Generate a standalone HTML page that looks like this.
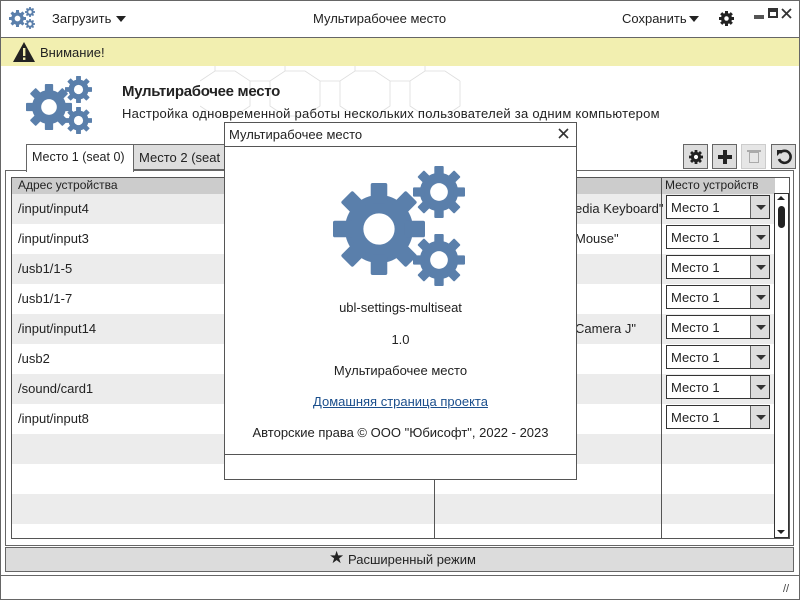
<!DOCTYPE html>
<html><head><meta charset="utf-8"><style>
*{box-sizing:border-box;margin:0;padding:0}
body{width:800px;height:600px;overflow:hidden;background:#fff;font-family:"Liberation Sans","DejaVu Sans",sans-serif;font-size:13px;color:#222;position:relative}
.abs{position:absolute}
.row{position:absolute;left:12px;width:763px;height:30px}
.row span{position:absolute;top:7px}
.combo{position:absolute;left:666px;width:104px;height:24px;border:1px solid #333;background:#fff}
.combo span{position:absolute;left:4px;top:4px}
.combo i{position:absolute;right:0;top:0;width:19px;height:22px;background:#ddd;border-left:1px solid #666}
.combo i:after{content:"";position:absolute;left:5px;top:9px;border-left:5px solid transparent;border-right:5px solid transparent;border-top:5px solid #333}
.btn{position:absolute;top:144px;width:25px;height:25px;border:1px solid #666;background:#ddd}
</style></head><body>
<svg width="0" height="0" style="position:absolute"><defs>
<symbol id="g" viewBox="-50 -50 100 100"><g fill="#5a7fab"><circle r="37"/>
<rect x="-9" y="-50" width="18" height="22" rx="2"/><rect x="-9" y="-50" width="18" height="22" rx="2" transform="rotate(45)"/><rect x="-9" y="-50" width="18" height="22" rx="2" transform="rotate(90)"/><rect x="-9" y="-50" width="18" height="22" rx="2" transform="rotate(135)"/><rect x="-9" y="-50" width="18" height="22" rx="2" transform="rotate(180)"/><rect x="-9" y="-50" width="18" height="22" rx="2" transform="rotate(225)"/><rect x="-9" y="-50" width="18" height="22" rx="2" transform="rotate(270)"/><rect x="-9" y="-50" width="18" height="22" rx="2" transform="rotate(315)"/></g><circle r="17" fill="#fff"/></symbol>
<symbol id="gd" viewBox="-50 -50 100 100"><g fill="#222"><circle r="37"/>
<rect x="-10" y="-50" width="20" height="22"/><rect x="-10" y="-50" width="20" height="22" transform="rotate(45)"/><rect x="-10" y="-50" width="20" height="22" transform="rotate(90)"/><rect x="-10" y="-50" width="20" height="22" transform="rotate(135)"/><rect x="-10" y="-50" width="20" height="22" transform="rotate(180)"/><rect x="-10" y="-50" width="20" height="22" transform="rotate(225)"/><rect x="-10" y="-50" width="20" height="22" transform="rotate(270)"/><rect x="-10" y="-50" width="20" height="22" transform="rotate(315)"/></g><circle r="15" fill="#fff"/></symbol>
</defs></svg>
<div class="abs" style="left:0;top:0;width:800px;height:600px;border:1px solid #666"></div>
<!-- title bar -->
<svg class="abs" style="left:9px;top:6px" width="28" height="24"><use href="#g" x="0" y="4" width="17" height="17"/><use href="#g" x="16" y="1" width="10" height="10"/><use href="#g" x="16" y="13" width="10" height="10"/></svg>
<div class="abs" style="left:52px;top:11px">Загрузить</div>
<div class="abs" style="left:116px;top:16px;border-left:5px solid transparent;border-right:5px solid transparent;border-top:6px solid #222"></div>
<div class="abs" style="left:313px;top:11px">Мультирабочее место</div>
<div class="abs" style="left:622px;top:11px">Сохранить</div>
<div class="abs" style="left:689px;top:16px;border-left:5px solid transparent;border-right:5px solid transparent;border-top:6px solid #222"></div>
<svg class="abs" style="left:719px;top:11px" width="15" height="15"><use href="#gd" width="15" height="15"/></svg>
<div class="abs" style="left:754px;top:15px;width:10px;height:4px;background:#555"></div>
<div class="abs" style="left:768px;top:8px;width:10px;height:10px;border:2px solid #333;border-top-width:4px"></div>
<svg class="abs" style="left:781px;top:8px" width="11" height="11"><path d="M1 1 L10 10 M10 1 L1 10" stroke="#333" stroke-width="1.8"/></svg>
<div class="abs" style="left:0;top:37px;width:800px;height:1px;background:#666"></div>
<!-- warning -->
<div class="abs" style="left:1px;top:38px;width:798px;height:28px;background:#f2efb0"></div>
<svg class="abs" style="left:12px;top:41px" width="24" height="22"><path d="M12 1 L23 21 L1 21 Z" fill="#222"/><rect x="11" y="7" width="2.4" height="8" fill="#f2efb0"/><rect x="11" y="16.5" width="2.4" height="2.4" fill="#f2efb0"/></svg>
<div class="abs" style="left:40px;top:45px">Внимание!</div>
<!-- header -->
<svg class="abs" style="left:200px;top:66px" width="270" height="60" stroke="#ddd" fill="none" stroke-width="0.8"><path d="M0 15 L15 5 L35 5 L50 15 L70 15 L85 5 L105 5 L120 15 L140 15 L155 5 L175 5 L190 15 L210 15 L225 5 L245 5 L260 15 M15 5 L15 0 M85 5 L85 0 M155 5 L155 0 M225 5 L225 0 M50 15 L50 40 L35 50 L15 50 L0 40 M120 15 L120 40 L105 50 L85 50 L70 40 L70 15 M190 15 L190 40 L175 50 L155 50 L140 40 L140 15 M260 15 L260 40 L245 50 L225 50 L210 40 L210 15"/></svg>
<svg class="abs" style="left:26px;top:76px" width="68" height="58"><use href="#g" x="0" y="8" width="46" height="46"/><use href="#g" x="39" y="0" width="27" height="27"/><use href="#g" x="39" y="31" width="27" height="27"/></svg>
<div class="abs" style="left:122px;top:83px;font-size:15px;font-weight:bold;letter-spacing:-0.3px">Мультирабочее место</div>
<div class="abs" style="left:122px;top:106px;letter-spacing:0.25px">Настройка одновременной работы нескольких пользователей за одним компьютером</div>
<!-- tabs -->
<div class="abs" style="left:26px;top:144px;width:108px;height:28px;border:1px solid #666;border-bottom:none;background:#fff;z-index:2"><span style="position:absolute;left:5px;top:5px;font-size:12.5px">Место 1 (seat 0)</span></div>
<div class="abs" style="left:133px;top:144px;width:100px;height:26px;border:1px solid #666;background:#ddd"><span style="position:absolute;left:5px;top:5px">Место 2 (seat</span></div>
<div class="btn" style="left:683px"><svg style="position:absolute;left:5px;top:5px" width="14" height="14"><use href="#gd" width="14" height="14"/></svg></div>
<div class="btn" style="left:712px"><div class="abs" style="left:5px;top:10px;width:14px;height:4px;background:#222"></div><div class="abs" style="left:10px;top:5px;width:4px;height:14px;background:#222"></div></div>
<div class="btn" style="left:741px;border-color:#ccc;background:#e6e6e6"><div class="abs" style="left:7px;top:7px;width:10px;height:11px;border:1px solid #aaa"></div><div class="abs" style="left:5px;top:5px;width:14px;height:2px;background:#aaa"></div></div>
<div class="btn" style="left:771px"><svg style="position:absolute;left:4px;top:4px" width="16" height="16"><path d="M4 4 A6 6 0 1 1 3 10" fill="none" stroke="#222" stroke-width="2.6"/><path d="M1 1 L7 1 L1 7Z" fill="#222"/></svg></div>
<!-- table -->
<div class="abs" style="left:5px;top:170px;width:789px;height:376px;border:1px solid #666"></div>
<div class="abs" style="left:11px;top:177px;width:779px;height:362px;border:1px solid #555"></div>
<div class="abs" style="left:12px;top:178px;width:763px;height:16px;background:#ccc"></div>
<div class="abs" style="left:18px;top:178px;font-size:12px">Адрес устройства</div>
<div class="abs" style="left:665px;top:178px;font-size:12px">Место устройств</div>
<div class="row" style="top:194px;background:#ececec"><span style="left:6px">/input/input4</span><span style="left:563px">edia Keyboard"</span></div>
<div class="row" style="top:224px"><span style="left:6px">/input/input3</span><span style="left:563px">Mouse"</span></div>
<div class="row" style="top:254px;background:#ececec"><span style="left:6px">/usb1/1-5</span></div>
<div class="row" style="top:284px"><span style="left:6px">/usb1/1-7</span></div>
<div class="row" style="top:314px;background:#ececec"><span style="left:6px">/input/input14</span><span style="left:563px">Camera J"</span></div>
<div class="row" style="top:344px"><span style="left:6px">/usb2</span></div>
<div class="row" style="top:374px;background:#ececec"><span style="left:6px">/sound/card1</span></div>
<div class="row" style="top:404px"><span style="left:6px">/input/input8</span></div>
<div class="row" style="top:434px;background:#ececec"></div>
<div class="row" style="top:494px;background:#ececec"></div>
<div class="abs" style="left:434px;top:194px;width:1px;height:344px;background:#555"></div>
<div class="abs" style="left:661px;top:178px;width:1px;height:360px;background:#555"></div>
<div class="combo" style="top:195px"><span>Место 1</span><i></i></div>
<div class="combo" style="top:225px"><span>Место 1</span><i></i></div>
<div class="combo" style="top:255px"><span>Место 1</span><i></i></div>
<div class="combo" style="top:285px"><span>Место 1</span><i></i></div>
<div class="combo" style="top:315px"><span>Место 1</span><i></i></div>
<div class="combo" style="top:345px"><span>Место 1</span><i></i></div>
<div class="combo" style="top:375px"><span>Место 1</span><i></i></div>
<div class="combo" style="top:405px"><span>Место 1</span><i></i></div>
<div class="abs" style="left:774px;top:193px;width:15px;height:345px;border:1px solid #333;background:#fff"></div>
<div class="abs" style="left:777px;top:196px;border-left:4px solid transparent;border-right:4px solid transparent;border-bottom:4px solid #222"></div>
<div class="abs" style="left:778px;top:206px;width:7px;height:22px;border-radius:4px;background:#222"></div>
<div class="abs" style="left:777px;top:530px;border-left:4px solid transparent;border-right:4px solid transparent;border-top:4px solid #222"></div>
<!-- bottom button -->
<div class="abs" style="left:5px;top:547px;width:789px;height:25px;border:1px solid #666;background:#dcdcdc"></div>
<div class="abs" style="left:329px;top:548px;font-size:17px">★</div>
<div class="abs" style="left:348px;top:552px">Расширенный режим</div>
<div class="abs" style="left:0;top:575px;width:800px;height:1px;background:#666"></div>
<div class="abs" style="left:783px;top:583px;font-size:11px;color:#444">//</div>
<!-- dialog -->
<div class="abs" style="left:224px;top:122px;width:353px;height:358px;border:1px solid #555;background:#fff"></div>
<div class="abs" style="left:225px;top:146px;width:351px;height:1px;background:#555"></div>
<div class="abs" style="left:229px;top:127px">Мультирабочее место</div>
<svg class="abs" style="left:558px;top:128px" width="11" height="11"><path d="M1 1 L10 10 M10 1 L1 10" stroke="#333" stroke-width="1.6"/></svg>
<svg class="abs" style="left:333px;top:166px" width="135" height="120"><use href="#g" x="0" y="17" width="92" height="92"/><use href="#g" x="80" y="0" width="52" height="52"/><use href="#g" x="80" y="68" width="52" height="52"/></svg>
<div class="abs" style="left:224px;width:353px;text-align:center;top:300px">ubl-settings-multiseat</div>
<div class="abs" style="left:224px;width:353px;text-align:center;top:332px">1.0</div>
<div class="abs" style="left:224px;width:353px;text-align:center;top:363px">Мультирабочее место</div>
<div class="abs" style="left:224px;width:353px;text-align:center;top:394px;color:#1a4e8c;text-decoration:underline">Домашняя страница проекта</div>
<div class="abs" style="left:224px;width:353px;text-align:center;top:425px">Авторские права © ООО "Юбисофт", 2022 - 2023</div>
<div class="abs" style="left:225px;top:454px;width:351px;height:1px;background:#555"></div>
</body></html>
